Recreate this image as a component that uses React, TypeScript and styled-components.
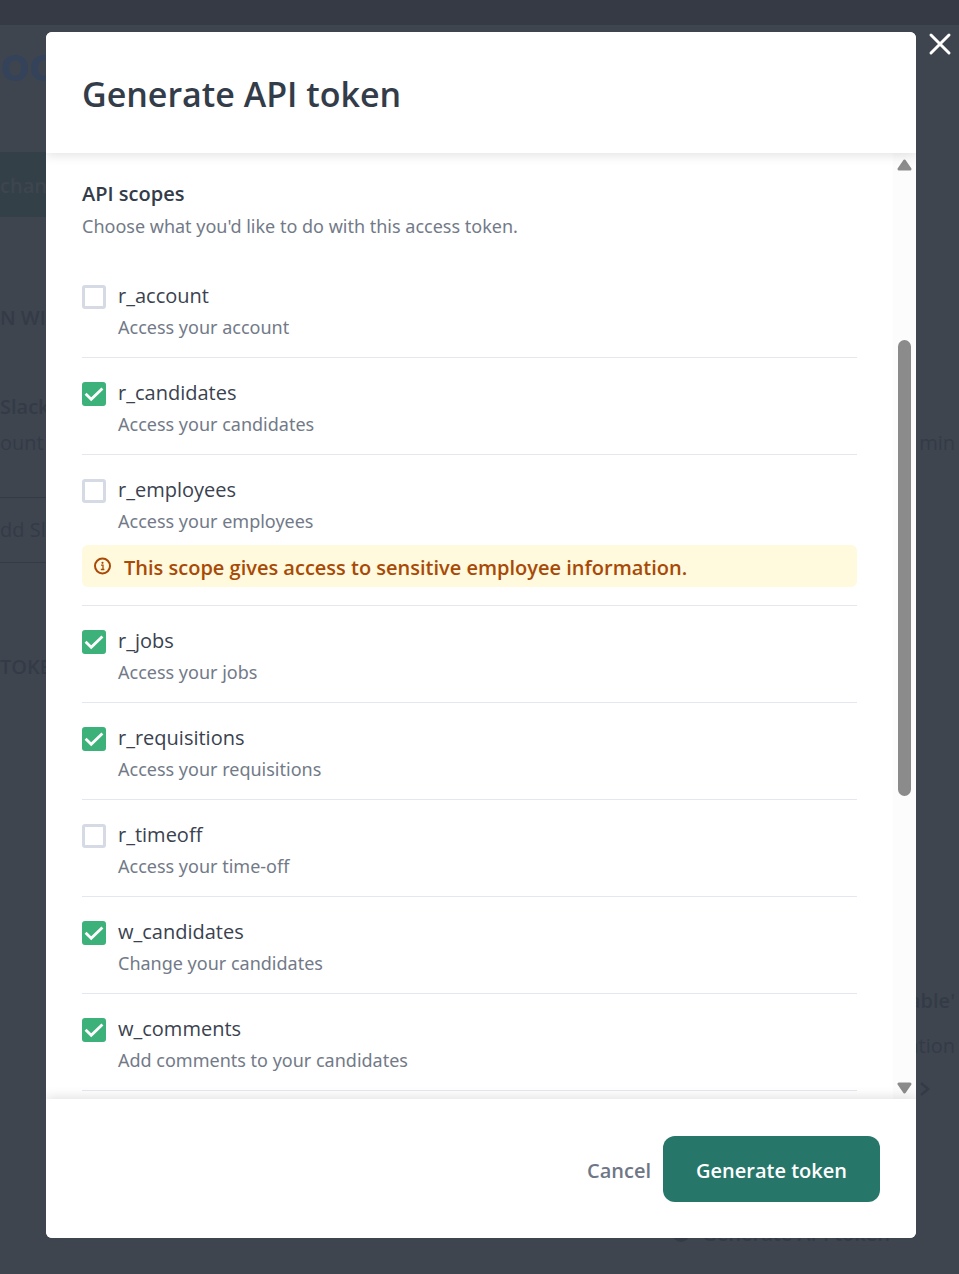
import React, { useState } from "react";
import styled, { createGlobalStyle } from "styled-components";

const Global = createGlobalStyle`
  * { box-sizing: border-box; }
  body { margin: 0; background: #3e454f; }
  body, button, input { font-family: "Open Sans", "Noto Sans", sans-serif; }
  h1, h2, p, ul { margin: 0; padding: 0; }
`;

const Screen = styled.div`
  position: relative;
  height: 100vh;
  min-height: 640px;
  padding: 32px 43px 36px 46px;
  overflow: hidden;
`;

/* Dimmed page behind the dialog */
const Backdrop = styled.div`
  position: absolute;
  inset: 0;
  overflow: hidden;
  color: #343b47;
  background: #3e454f;
`;

const TopBar = styled.div`
  height: 25px;
  background: #353a45;
`;

const LogoRow = styled.div`
  height: 127px;
  padding-top: 5px;
  margin-left: -22px;
  font-family: Lato, sans-serif;
  font-size: 50px;
  line-height: 64px;
  font-weight: 900;
  color: #34435a;
`;

const Banner = styled.div`
  height: 65px;
  margin-right: 80px;
  line-height: 68px;
  font-size: 20px;
  font-weight: 600;
  color: #3e454f;
  background: #334048;
`;

const BackRow = styled.div<{ $gap?: number; $bold?: boolean; $end?: boolean }>`
  display: flex;
  justify-content: ${(p) => (p.$end ? "flex-end" : "space-between")};
  align-items: center;
  margin-top: ${(p) => p.$gap ?? 0}px;
  padding-right: 4px;
  height: 36px;
  font-size: 20px;
  font-weight: ${(p) => (p.$bold ? 600 : 400)};
  white-space: nowrap;
`;

const BackPanel = styled.div`
  margin: 37px 80px 0 0;
  border: solid #343b47;
  border-width: 1px 0;
  font-size: 20px;
  line-height: 64px;
`;

const BackAction = styled(BackRow)`
  gap: 12px;
  padding-right: 69px;
  font-weight: 600;
`;

const Dot = styled.span`
  width: 18px;
  height: 18px;
  border-radius: 50%;
  background: #343b47;
`;

const ChevronBox = styled.span`
  display: flex;
  padding-right: 24px;
`;

const Dialog = styled.section`
  position: relative;
  display: flex;
  flex-direction: column;
  height: 100%;
  border-radius: 6px;
  background: #fff;
`;

const CloseButton = styled.button`
  position: absolute;
  top: 0;
  left: 100%;
  display: flex;
  margin-left: 12px;
  padding: 0;
  border: 0;
  background: none;
  cursor: pointer;
`;

const Header = styled.header`
  position: relative;
  padding: 38px 36px 34px;
  border-radius: 6px 6px 0 0;
  background: #fff;
  box-shadow: 0 2px 12px rgba(0, 0, 0, 0.12);
  clip-path: inset(0 0 -16px 0);
`;

const Title = styled.h1`
  font-size: 34px;
  line-height: 49px;
  font-weight: 600;
  color: #333c49;
`;

const Body = styled.div`
  display: flex;
  flex: 1;
  min-height: 0;
`;

const Scroller = styled.div`
  flex: 1;
  min-width: 0;
  padding: 25px 36px 0;
  overflow-y: auto;
  scrollbar-width: none;
`;

const SectionTitle = styled.h2`
  font-size: 20px;
  line-height: 32px;
  font-weight: 600;
  color: #333c49;
`;

const SectionText = styled.p`
  font-family: "Noto Sans", sans-serif;
  font-size: 18px;
  line-height: 32px;
  color: #727a88;
`;

const ScopeList = styled.ul`
  padding-top: 19px;
  list-style: none;
`;

const ScopeItem = styled.li`
  padding: 17px 0;
  border-bottom: 1px solid #e4e7ee;
`;

const ScopeLabel = styled.label`
  display: grid;
  grid-template-columns: 24px 1fr;
  column-gap: 12px;
  cursor: pointer;
`;

const ScopeName = styled.span`
  font-size: 20px;
  line-height: 36px;
  color: #3a424f;
`;

const ScopeText = styled.span`
  grid-column: 2;
  padding-top: 1px;
  font-family: "Noto Sans", sans-serif;
  font-size: 18px;
  line-height: 25px;
  color: #727a88;
`;

const CheckCell = styled.span`
  display: grid;
  align-content: start;
  padding-top: 7px;
  > * { grid-area: 1 / 1; }
  svg { pointer-events: none; }
`;

const Check = styled.input`
  appearance: none;
  width: 24px;
  height: 24px;
  margin: 0;
  border: 3px solid #d5dae5;
  border-radius: 3px;
  background: #fff;
  &:checked {
    border-color: #3cb179;
    background: #3cb179;
  }
`;

const Warning = styled.p`
  display: flex;
  align-items: center;
  gap: 12px;
  min-height: 42px;
  margin: 11px 0 1px;
  padding: 0 11px;
  border-radius: 6px;
  font-size: 20px;
  line-height: 30px;
  font-weight: 600;
  color: #a84a06;
  background: #fff9de;
  span { padding-top: 3px; }
`;

const Scrollbar = styled.div`
  display: flex;
  flex-direction: column;
  align-items: center;
  width: 23px;
  padding: 6px 0 5px;
  background: #fcfcfc;
`;

const TrackSpace = styled.div<{ $grow: number }>`
  flex: ${(p) => p.$grow} 0 0;
`;

const Thumb = styled.div`
  flex: 456 0 0;
  width: 13px;
  border-radius: 7px;
  background: #8b8b8b;
`;

const Footer = styled.footer`
  position: relative;
  display: flex;
  justify-content: flex-end;
  gap: 12px;
  padding: 37px 36px 36px;
  border-radius: 0 0 6px 6px;
  background: #fff;
  box-shadow: 0 -2px 12px rgba(0, 0, 0, 0.12);
  clip-path: inset(-16px 0 0 0);
`;

const CancelButton = styled.button`
  padding: 2px 0 0;
  border: 0;
  font-size: 20px;
  font-weight: 600;
  color: #6f7786;
  background: none;
  cursor: pointer;
`;

const PrimaryButton = styled.button`
  height: 66px;
  padding: 2px 33px 0;
  border: 0;
  border-radius: 12px;
  font-size: 20px;
  font-weight: 600;
  color: #fff;
  background: #26766a;
  cursor: pointer;
`;

type Scope = { name: string; text: string; on: boolean; warning?: string };

const scopes: Scope[] = [
  { name: "r_account", text: "Access your account", on: false },
  { name: "r_candidates", text: "Access your candidates", on: true },
  {
    name: "r_employees",
    text: "Access your employees",
    on: false,
    warning: "This scope gives access to sensitive employee information.",
  },
  { name: "r_jobs", text: "Access your jobs", on: true },
  { name: "r_requisitions", text: "Access your requisitions", on: true },
  { name: "r_timeoff", text: "Access your time-off", on: false },
  { name: "w_candidates", text: "Change your candidates", on: true },
  { name: "w_comments", text: "Add comments to your candidates", on: true },
];

function InfoIcon() {
  return (
    <svg width="19" height="19" viewBox="0 0 19 19" fill="none" aria-hidden="true">
      <circle cx="9.5" cy="9" r="7.5" stroke="currentColor" strokeWidth="2" />
      <circle cx="9.5" cy="5.8" r="1.1" fill="currentColor" />
      <path d="M8 8.1h2v4.2M7.8 12.5h3.6" stroke="currentColor" strokeWidth="1.3" />
    </svg>
  );
}

function ScopeRow({ scope }: { scope: Scope }) {
  const [on, setOn] = useState(scope.on);
  return (
    <ScopeItem>
      <ScopeLabel>
        <CheckCell>
          <Check type="checkbox" checked={on} onChange={() => setOn(!on)} />
          {on && (
            <svg width="24" height="24" viewBox="0 0 24 24" fill="none" aria-hidden="true">
              <path d="M3.6 11.8l5.6 5.4L20.4 6.4" stroke="#fff" strokeWidth="2.8" />
            </svg>
          )}
        </CheckCell>
        <ScopeName>{scope.name}</ScopeName>
        <ScopeText>{scope.text}</ScopeText>
      </ScopeLabel>
      {scope.warning && (
        <Warning>
          <InfoIcon />
          <span>{scope.warning}</span>
        </Warning>
      )}
    </ScopeItem>
  );
}

function PageBehind() {
  return (
    <Backdrop aria-hidden="true">
      <TopBar />
      <LogoRow>zoo</LogoRow>
      <Banner>chang</Banner>
      <BackRow $gap={82} $bold>N WI</BackRow>
      <BackRow $gap={53} $bold>Slack</BackRow>
      <BackRow>
        <span>ount</span>
        <span>min</span>
      </BackRow>
      <BackPanel>dd Sla</BackPanel>
      <BackRow $gap={85} $bold>TOKE</BackRow>
      <BackRow $gap={298} $bold $end>able'</BackRow>
      <BackRow $gap={9} $end>ation</BackRow>
      <BackRow $gap={8} $end>
        <ChevronBox>
          <svg width="12" height="16" viewBox="0 0 12 16" fill="none">
            <path d="M2 2l7 6-7 6" stroke="currentColor" strokeWidth="2.4" />
          </svg>
        </ChevronBox>
      </BackRow>
      <BackAction $gap={108} $end>
        <Dot />
        Generate API token
      </BackAction>
    </Backdrop>
  );
}

export default function App() {
  return (
    <>
      <Global />
      <Screen>
        <PageBehind />
        <Dialog role="dialog" aria-labelledby="dialog-title">
          <CloseButton type="button" aria-label="Close">
            <svg width="24" height="24" viewBox="0 0 24 24" fill="none">
              <path d="M3 3l18 18M21 3L3 21" stroke="#fff" strokeWidth="3" strokeLinecap="round" />
            </svg>
          </CloseButton>
          <Header>
            <Title id="dialog-title">Generate API token</Title>
          </Header>
          <Body>
            <Scroller>
              <SectionTitle>API scopes</SectionTitle>
              <SectionText>Choose what you'd like to do with this access token.</SectionText>
              <ScopeList>
                {scopes.map((scope) => (
                  <ScopeRow key={scope.name} scope={scope} />
                ))}
              </ScopeList>
            </Scroller>
            <Scrollbar aria-hidden="true">
              <svg width="15" height="12" viewBox="0 0 15 12">
                <path d="M7.5 2L2 10h11z" fill="#8b8b8b" stroke="#8b8b8b" strokeWidth="3" strokeLinejoin="round" />
              </svg>
              <TrackSpace $grow={169} />
              <Thumb />
              <TrackSpace $grow={286} />
              <svg width="15" height="12" viewBox="0 0 15 12">
                <path d="M7.5 10L2 2h11z" fill="#8b8b8b" stroke="#8b8b8b" strokeWidth="3" strokeLinejoin="round" />
              </svg>
            </Scrollbar>
          </Body>
          <Footer>
            <CancelButton type="button">Cancel</CancelButton>
            <PrimaryButton type="button">Generate token</PrimaryButton>
          </Footer>
        </Dialog>
      </Screen>
    </>
  );
}
